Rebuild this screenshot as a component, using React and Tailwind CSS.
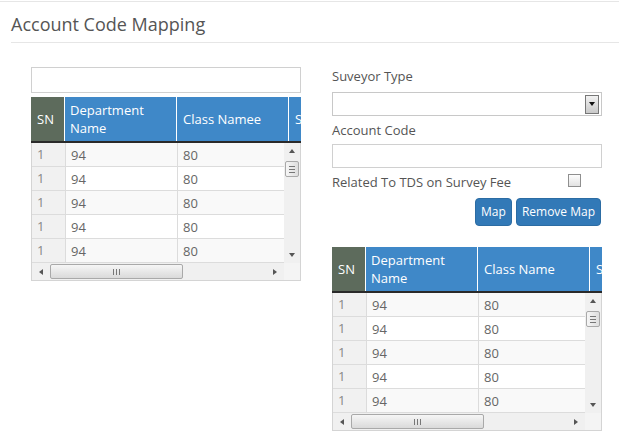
import React from "react";

const rows = [1, 2, 3, 4, 5, 6];

const ArrowUp = () => (
  <div className="w-0 h-0 border-l-[3px] border-r-[3px] border-b-[4px] border-l-transparent border-r-transparent border-b-[#555]" />
);
const ArrowDown = () => (
  <div className="w-0 h-0 border-l-[3px] border-r-[3px] border-t-[4px] border-l-transparent border-r-transparent border-t-[#555]" />
);
const ArrowLeft = () => (
  <div className="w-0 h-0 border-t-[3px] border-b-[3px] border-r-[4px] border-t-transparent border-b-transparent border-r-[#555]" />
);
const ArrowRight = () => (
  <div className="w-0 h-0 border-t-[3px] border-b-[3px] border-l-[4px] border-t-transparent border-b-transparent border-l-[#555]" />
);

const Grid = ({ classTitle }) => (
  <div className="w-[270px]">
    {/* header */}
    <div className="flex h-[46px] overflow-hidden border-b-2 border-[#2a2a2a] text-white text-[13px] leading-[18px]">
      <div className="w-[34px] shrink-0 bg-[#5d6b5c] border-r border-white flex items-center pl-[6px]">SN</div>
      <div className="w-[112px] shrink-0 bg-[#3f88c8] border-r border-white flex items-center pl-[5px]">
        Department
        <br />
        Name
      </div>
      <div className="w-[112px] shrink-0 bg-[#3f88c8] border-r border-white flex items-center pl-[6px]">{classTitle}</div>
      <div className="w-[60px] shrink-0 bg-[#3f88c8] flex items-center pl-[6px]">SN</div>
    </div>
    {/* body */}
    <div className="border-l border-r border-b border-[#d4d4d4]">
      <div className="flex">
        <div className="h-[120px] w-[252px] overflow-hidden text-[13px] text-[#666]">
          {rows.map((r) => (
            <div key={r} className={`flex h-[24px] border-b border-[#dcdcdc] ${r % 2 ? "bg-[#f9f9f9]" : "bg-white"}`}>
              <div className="w-[33px] shrink-0 bg-[#f1f1f1] text-[#888] pl-[5px] leading-[23px]">1</div>
              <div className="w-[112px] shrink-0 border-l border-[#dcdcdc] pl-[5px] leading-[24px]">94</div>
              <div className="w-[112px] shrink-0 border-l border-[#dcdcdc] pl-[5px] leading-[24px]">80</div>
            </div>
          ))}
        </div>
        {/* vertical scrollbar */}
        <div className="w-[16px] h-[120px] bg-[#f0f0f0] flex flex-col items-center">
          <div className="h-[16px] flex items-center justify-center">
            <ArrowUp />
          </div>
          <div className="w-[14px] h-[16px] mt-[2px] border border-[#a9a9a9] rounded-[2px] bg-gradient-to-r from-[#f6f6f6] to-[#dedede] flex flex-col items-center justify-center gap-[2px]">
            <div className="w-[6px] h-px bg-[#777]" />
            <div className="w-[6px] h-px bg-[#777]" />
            <div className="w-[6px] h-px bg-[#777]" />
          </div>
          <div className="flex-1" />
          <div className="h-[16px] flex items-center justify-center">
            <ArrowDown />
          </div>
        </div>
      </div>
      {/* horizontal scrollbar */}
      <div className="flex h-[17px] bg-[#f0f0f0]">
        <div className="w-[252px] flex items-center">
          <div className="w-[18px] flex justify-center">
            <ArrowLeft />
          </div>
          <div className="w-[133px] h-[15px] border border-[#a9a9a9] rounded-[2px] bg-gradient-to-b from-[#f6f6f6] to-[#dadada] flex items-center justify-center gap-[2px]">
            <div className="w-px h-[6px] bg-[#777]" />
            <div className="w-px h-[6px] bg-[#777]" />
            <div className="w-px h-[6px] bg-[#777]" />
          </div>
          <div className="flex-1" />
          <div className="w-[18px] flex justify-center">
            <ArrowRight />
          </div>
        </div>
        <div className="w-[16px] bg-[#f4f4f4]" />
      </div>
    </div>
  </div>
);

export default function App() {
  return (
    <div className="w-[619px] h-[440px] bg-white overflow-hidden font-['Open_Sans',sans-serif] text-[#555]">
      <div className="h-[2px] border-t border-[#e6e6e6] mt-px" />
      <div className="ml-[11px] h-[40px] border-b border-[#e6e6e6] flex items-center">
        <h1 className="text-[18px] text-[#555] leading-none pt-[2px]">Account Code Mapping</h1>
      </div>

      <div className="flex gap-[31px] pl-[31px] pt-[24px]">
        {/* left */}
        <div className="w-[270px]">
          <input className="w-[270px] h-[26px] border border-[#d0d0d0] outline-none px-2 text-[13px]" />
          <div className="mt-[4px]">
            <Grid classTitle="Class Namee" />
          </div>
        </div>

        {/* right */}
        <div className="w-[270px] text-[13px]">
          <div className="leading-[20px] -mt-px">Suveyor Type</div>
          <div className="mt-[6px] h-[24px] border border-[#c8c8c8] flex justify-end items-center pr-[2px]">
            <div className="w-[14px] h-[19px] border border-[#777] bg-gradient-to-b from-[#f2f2f2] to-[#c9c9c9] flex items-center justify-center">
              <div className="w-0 h-0 border-l-[3px] border-r-[3px] border-t-[4px] border-l-transparent border-r-transparent border-t-[#111]" />
            </div>
          </div>
          <div className="leading-[20px] mt-[4px]">Account Code</div>
          <div className="mt-[4px] h-[24px] border border-[#d0d0d0]" />
          <div className="flex items-center justify-between h-[20px] mt-[5px]">
            <span>Related To TDS on Survey Fee</span>
            <div className="w-[13px] h-[13px] border border-[#8f8f8f] bg-gradient-to-b from-[#fdfdfd] to-[#e2e2e2] mr-[21px] -mt-[6px]" />
          </div>
          <div className="flex justify-end gap-[4px] mt-[5px] pr-px">
            <button className="h-[28px] px-[5px] rounded-[4px] bg-[#3279b7] border border-[#2c6ca3] text-white text-[12px]">Map</button>
            <button className="h-[28px] px-[5px] rounded-[4px] bg-[#3279b7] border border-[#2c6ca3] text-white text-[12px]">Remove Map</button>
          </div>
          <div className="mt-[21px]">
            <Grid classTitle="Class Name" />
          </div>
        </div>
      </div>
    </div>
  );
}
